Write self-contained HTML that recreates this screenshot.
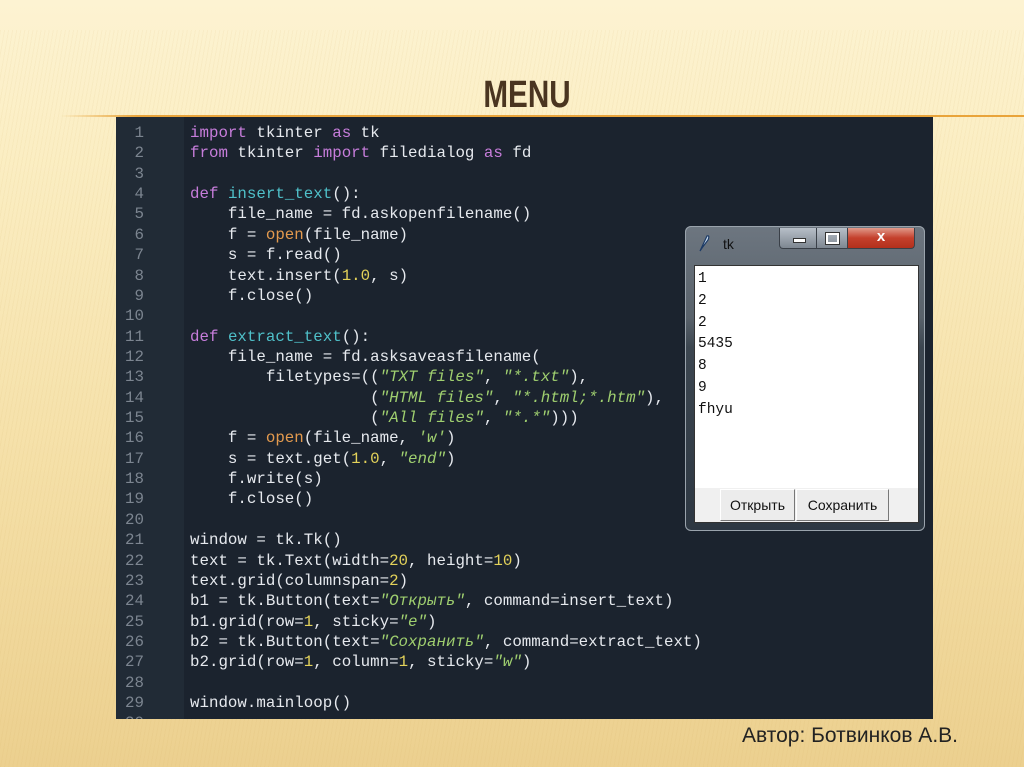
<!DOCTYPE html>
<html><head><meta charset="utf-8"><style>
html,body{margin:0;padding:0}
body{width:1024px;height:767px;position:relative;overflow:hidden;
background:linear-gradient(180deg,#fdf3d2 0%,#fbeec3 20%,#f5e0a8 60%,#ecd08f 100%);font-family:"Liberation Sans",sans-serif}
.stripes{position:absolute;left:0;top:30px;width:1024px;height:737px;
background:repeating-linear-gradient(100deg,rgba(200,160,80,0.07) 0 1px,rgba(255,255,255,0) 1px 4px)}
.title{position:absolute;left:427px;width:200px;top:74px;text-align:center;font-size:38px;font-weight:bold;color:#4a3520;font-family:"Liberation Sans Narrow","Liberation Sans",sans-serif;transform:scaleX(0.78)}
.line{position:absolute;left:60px;right:0;top:115px;height:2px;background:linear-gradient(90deg,rgba(230,160,40,0) 0,#e9a43a 8%,#e9a43a 100%)}
.code{position:absolute;left:116px;top:117px;width:817px;height:602px;background:#1b232e;overflow:hidden}
.gut{position:absolute;left:0;top:0;width:68px;height:100%;background:#212b36}
pre{margin:0;position:absolute;top:6px;font-family:"Liberation Mono",monospace;font-size:15.8px;line-height:20.36px;color:#e6e9ee}
.ln{left:0;width:28px;text-align:right;color:#7c8590}
.src{left:74px}
.k{color:#c77ddb}.f{color:#4fc0c9}.b{color:#e39a4e}.n{color:#e3d25a}.s{color:#9fcf6f;font-style:italic}
.win{position:absolute;left:685px;top:226px;width:240px;height:305px;border-radius:6px;background:linear-gradient(180deg,#6d7680 0%,#59626b 30%,#3c4650 40%,#2d3742 100%);box-shadow:0 0 0 1px #9aa3ac inset}
.tt{position:absolute;left:38px;top:10px;font-size:14px;color:#111}
.btns{position:absolute;left:94px;top:2px;width:140px;height:22px}
.wb{position:absolute;top:0;height:20px;border:1px solid #3a4048;border-top:none;background:linear-gradient(180deg,#b7bfc8,#7e8791)}
.ta{position:absolute;left:9px;top:39px;width:223px;height:223px;background:#fff;border:1px solid #333}
.ta pre{position:static;margin:3px 0 0 3px;color:#111;font-size:14.5px;line-height:21.8px;font-family:"Liberation Mono",monospace}
.bar{position:absolute;left:9px;top:262px;width:223px;height:34px;background:#f0f0f0;border:1px solid #333;border-top:none}
.bt{position:absolute;top:1px;height:30px;background:#ececec;border:1px solid #fff;border-right-color:#777;border-bottom-color:#777;font-size:14px;line-height:30px;text-align:center;color:#111}
.auth{position:absolute;left:742px;top:724px;font-size:21px;color:#222;font-family:"Liberation Sans Narrow","Liberation Sans",sans-serif;transform-origin:left top;transform:scaleX(1.0)}
</style></head><body>
<div class="stripes"></div>
<div class="title">MENU</div>
<div class="line"></div>
<div class="code"><div class="gut"></div>
<pre class="ln">1
2
3
4
5
6
7
8
9
10
11
12
13
14
15
16
17
18
19
20
21
22
23
24
25
26
27
28
29
30</pre>
<pre class="src"><span class="k">import</span> tkinter <span class="k">as</span> tk
<span class="k">from</span> tkinter <span class="k">import</span> filedialog <span class="k">as</span> fd

<span class="k">def</span> <span class="f">insert_text</span>():
    file_name = fd.askopenfilename()
    f = <span class="b">open</span>(file_name)
    s = f.read()
    text.insert(<span class="n">1.0</span>, s)
    f.close()

<span class="k">def</span> <span class="f">extract_text</span>():
    file_name = fd.asksaveasfilename(
        filetypes=((<span class="s">"TXT files"</span>, <span class="s">"*.txt"</span>),
                   (<span class="s">"HTML files"</span>, <span class="s">"*.html;*.htm"</span>),
                   (<span class="s">"All files"</span>, <span class="s">"*.*"</span>)))
    f = <span class="b">open</span>(file_name, <span class="s">'w'</span>)
    s = text.get(<span class="n">1.0</span>, <span class="s">"end"</span>)
    f.write(s)
    f.close()

window = tk.Tk()
text = tk.Text(width=<span class="n">20</span>, height=<span class="n">10</span>)
text.grid(columnspan=<span class="n">2</span>)
b1 = tk.Button(text=<span class="s">"Открыть"</span>, command=insert_text)
b1.grid(row=<span class="n">1</span>, sticky=<span class="s">"e"</span>)
b2 = tk.Button(text=<span class="s">"Сохранить"</span>, command=extract_text)
b2.grid(row=<span class="n">1</span>, column=<span class="n">1</span>, sticky=<span class="s">"w"</span>)

window.mainloop()</pre>
</div>
<div class="win">
<svg style="position:absolute;left:12px;top:8px" width="14" height="18" viewBox="0 0 14 18"><path d="M3 17 L10 2 Q13 1 11 6 L5 14 Z" fill="#c9dcef" stroke="#1d3b66" stroke-width="1.2"/></svg>
<div class="tt">tk</div>
<div class="btns">
<div class="wb" style="left:0;width:36px;border-radius:0 0 0 4px"><div style="position:absolute;left:13px;top:10px;width:11px;height:3px;background:#fff;border:1px solid #333"></div></div>
<div class="wb" style="left:37px;width:30px"><div style="position:absolute;left:9px;top:5px;width:9px;height:7px;border:2px solid #fff;outline:1px solid #333"></div></div>
<div class="wb" style="left:68px;width:66px;border-radius:0 0 4px 0;background:linear-gradient(180deg,#e09a8a,#c4402c 50%,#b3301c)"><div style="position:absolute;left:0;width:66px;top:0;text-align:center;color:#fff;font-weight:bold;font-size:15px">x</div></div>
</div>
<div class="ta"><pre>1
2
2
5435
8
9
fhyu</pre></div>
<div class="bar">
<div class="bt" style="left:25px;width:73px">Открыть</div>
<div class="bt" style="left:101px;width:91px">Сохранить</div>
</div>
</div>
<div class="auth">Автор: Ботвинков А.В.</div>
</body></html>
